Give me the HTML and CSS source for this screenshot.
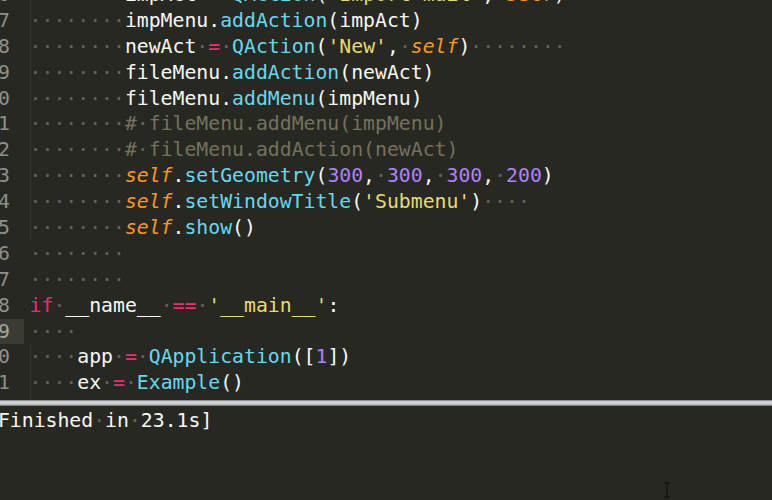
FILE: index.html
```html
<!DOCTYPE html>
<html>
<head>
<meta charset="utf-8">
<link rel="stylesheet" href="styles.css">
</head>
<body>
<div class="window">
  <div class="editor">
    <div class="code">
      <div class="row guide"><span class="ln">16</span><span class="tx"><span class="w">········</span>impAct<span class="w">·</span><span class="k">=</span><span class="w">·</span><span class="f">QAction</span>(<span class="s">'Import<span class="w">·</span>mail'</span>,<span class="w">·</span><span class="sf">self</span>)</span></div>
      <div class="row guide"><span class="ln">17</span><span class="tx"><span class="w">········</span>impMenu.<span class="f">addAction</span>(impAct)</span></div>
      <div class="row guide"><span class="ln">18</span><span class="tx"><span class="w">········</span>newAct<span class="w">·</span><span class="k">=</span><span class="w">·</span><span class="f">QAction</span>(<span class="s">'New'</span>,<span class="w">·</span><span class="sf">self</span>)<span class="w">········</span></span></div>
      <div class="row guide"><span class="ln">19</span><span class="tx"><span class="w">········</span>fileMenu.<span class="f">addAction</span>(newAct)</span></div>
      <div class="row guide"><span class="ln">20</span><span class="tx"><span class="w">········</span>fileMenu.<span class="f">addMenu</span>(impMenu)</span></div>
      <div class="row guide"><span class="ln">21</span><span class="tx"><span class="w">········</span><span class="c">#<span class="w">·</span>fileMenu.addMenu(impMenu)</span></span></div>
      <div class="row guide"><span class="ln">22</span><span class="tx"><span class="w">········</span><span class="c">#<span class="w">·</span>fileMenu.addAction(newAct)</span></span></div>
      <div class="row guide"><span class="ln">23</span><span class="tx"><span class="w">········</span><span class="sf">self</span>.<span class="f">setGeometry</span>(<span class="n">300</span>,<span class="w">·</span><span class="n">300</span>,<span class="w">·</span><span class="n">300</span>,<span class="w">·</span><span class="n">200</span>)</span></div>
      <div class="row guide"><span class="ln">24</span><span class="tx"><span class="w">········</span><span class="sf">self</span>.<span class="f">setWindowTitle</span>(<span class="s">'Submenu'</span>)<span class="w">····</span></span></div>
      <div class="row guide"><span class="ln">25</span><span class="tx"><span class="w">········</span><span class="sf">self</span>.<span class="f">show</span>()</span></div>
      <div class="row"><span class="ln">26</span><span class="tx"><span class="w">········</span></span></div>
      <div class="row"><span class="ln">27</span><span class="tx"><span class="w">········</span></span></div>
      <div class="row"><span class="ln">28</span><span class="tx"><span class="k">if</span><span class="w">·</span>__name__<span class="w">·</span><span class="k">==</span><span class="w">·</span><span class="s">'__main__'</span>:</span></div>
      <div class="row current"><span class="ln">29</span><span class="tx"><span class="w">····</span></span></div>
      <div class="row guide"><span class="ln">30</span><span class="tx"><span class="w">····</span>app<span class="w">·</span><span class="k">=</span><span class="w">·</span><span class="f">QApplication</span>([<span class="n">1</span>])</span></div>
      <div class="row guide"><span class="ln">31</span><span class="tx"><span class="w">····</span>ex<span class="w">·</span><span class="k">=</span><span class="w">·</span><span class="f">Example</span>()</span></div>
      <div class="row guide"><span class="ln">32</span><span class="tx"><span class="w">····</span></span></div>
    </div>
  </div>
  <div class="sep"></div>
  <div class="output">
    <div class="out-line">[Finished<span class="w">·</span>in<span class="w">·</span>23.1s]</div>
  </div>
  <svg class="ibeam" width="10" height="16" viewBox="0 0 10 16"><path d="M2 1h6M2 15h6M5 1v14" stroke="#141412" stroke-width="1.4" fill="none"/></svg>
</div>
</body>
</html>
```
FILE: styles.css
```css
html, body {
  margin: 0;
  padding: 0;
  background: #272822;
  overflow: hidden;
}

.window {
  position: relative;
  width: 772px;
  height: 500px;
  overflow: hidden;
  background: #272822;
  font-family: "DejaVu Sans Mono", "Liberation Mono", monospace;
  font-size: 19.8px;
  line-height: 25.9px;
  color: #f8f8f2;
}

.editor {
  height: 400px;
  overflow: hidden;
}

.code {
  margin-top: -18px;
  margin-left: -14px;
}

.row {
  display: flex;
  height: 25.9px;
  white-space: pre;
}

.ln {
  width: 38px;
  padding-right: 14.14px;
  box-sizing: border-box;
  text-align: right;
  color: #8f908a;
  flex: none;
}

.tx {
  margin-left: 5.6px;
  flex: none;
}

.guide .tx {
  box-shadow: inset 1px 0 0 #34352e;
}

.current .ln {
  background: #3a3b33;
  color: #a6a69e;
}

.w { color: #64635a; }
.k { color: #f92672; }
.f { color: #66d9ef; }
.s { color: #e6db74; }
.n { color: #ae81ff; }
.sf { color: #fd971f; font-style: italic; }
.c { color: #75715e; }
.c .w { color: #64635a; }

.sep {
  height: 6px;
  background: linear-gradient(#8f9394 0, #8f9394 1px, #c6cacb 1px, #d3d6d7 3px, #c6cacb 4px, #a9adae 5px, #5d605f 6px);
}

.output {
  height: 94px;
  padding-top: 1.5px;
  box-sizing: border-box;
}

.out-line {
  margin-left: -14px;
  white-space: pre;
  color: #f8f8f2;
}

.ibeam {
  position: absolute;
  left: 662px;
  top: 482px;
}
```
